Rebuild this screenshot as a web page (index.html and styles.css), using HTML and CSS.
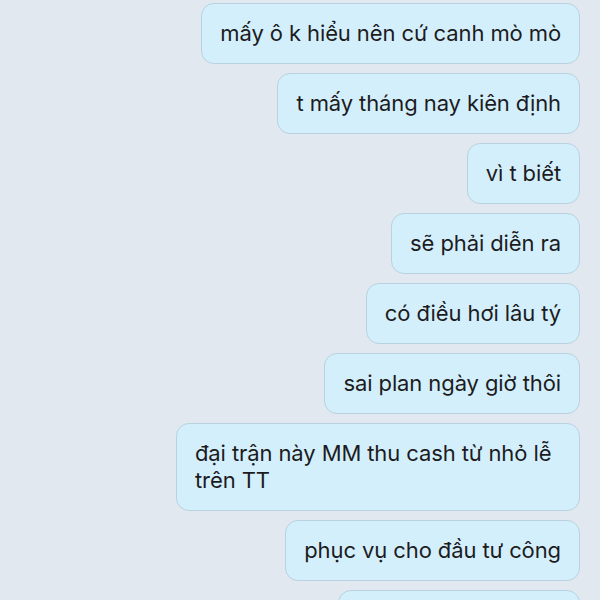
FILE: index.html
```html
<!DOCTYPE html>
<html lang="vi">
<head>
    <meta charset="UTF-8">
    <meta name="viewport" content="width=device-width, initial-scale=1.0">
    <title>Tin nhắn</title>
    <link rel="stylesheet" href="styles.css">
</head>
<body>
    <div class="chat">
        <div class="bubble">mấy ô k hiểu nên cứ canh mò mò</div>
        <div class="bubble">t mấy tháng nay kiên định</div>
        <div class="bubble">vì t biết</div>
        <div class="bubble">sẽ phải diễn ra</div>
        <div class="bubble">có điều hơi lâu tý</div>
        <div class="bubble">sai plan ngày giờ thôi</div>
        <div class="bubble">đại trận này MM thu cash từ nhỏ lễ trên TT</div>
        <div class="bubble">phục vụ cho đầu tư công</div>
        <div class="bubble">nên cứ chờ thôi nhé</div>
    </div>
</body>
</html>
```

FILE: styles.css
```css
body {
    margin: 0;
    padding: 0;
    background-color: #e2e8f0;
    font-family: 'Inter', 'Noto Sans', sans-serif;
    color: #1c1c1e;
    overflow: hidden;
}
.chat {
    display: flex;
    flex-direction: column;
    align-items: flex-end;
    gap: 9px;
    padding: 3px 20px 0 0;
}
.bubble {
    max-width: 366px;
    padding: 16px 18px;
    font-size: 22px;
    line-height: 27px;
    letter-spacing: -0.1px;
    background-color: #d4effc;
    border: 1px solid #b8d2df;
    border-radius: 13px;
}
```
